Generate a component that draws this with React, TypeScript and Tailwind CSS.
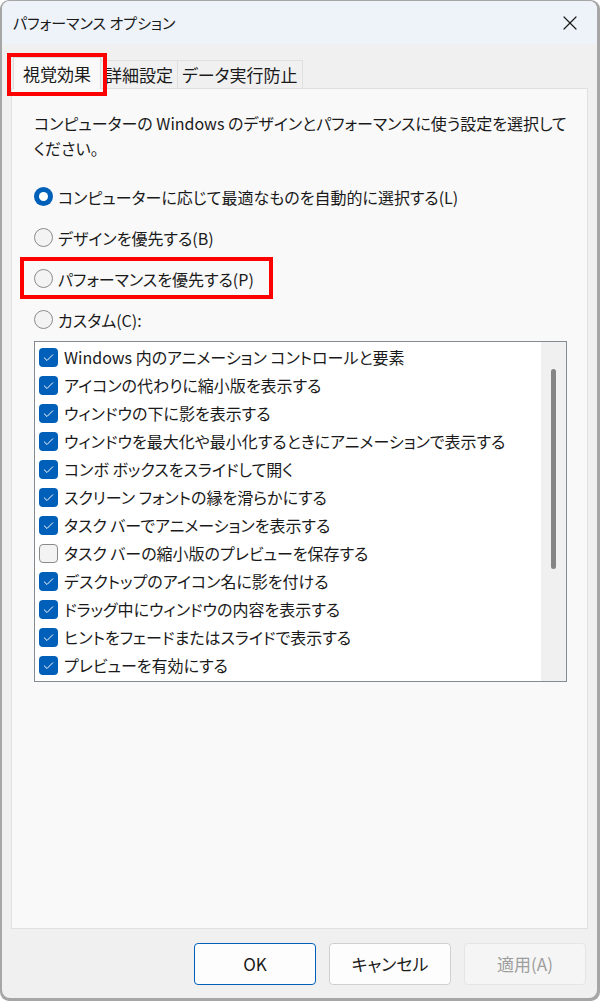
import { X } from 'lucide-react';

const items: { label: string; checked: boolean }[] = [
  { label: 'Windows 内のアニメーション コントロールと要素', checked: true },
  { label: 'アイコンの代わりに縮小版を表示する', checked: true },
  { label: 'ウィンドウの下に影を表示する', checked: true },
  { label: 'ウィンドウを最大化や最小化するときにアニメーションで表示する', checked: true },
  { label: 'コンボ ボックスをスライドして開く', checked: true },
  { label: 'スクリーン フォントの縁を滑らかにする', checked: true },
  { label: 'タスク バーでアニメーションを表示する', checked: true },
  { label: 'タスク バーの縮小版のプレビューを保存する', checked: false },
  { label: 'デスクトップのアイコン名に影を付ける', checked: true },
  { label: 'ドラッグ中にウィンドウの内容を表示する', checked: true },
  { label: 'ヒントをフェードまたはスライドで表示する', checked: true },
  { label: 'プレビューを有効にする', checked: true },
];

function Radio({ checked, label, highlight }: { checked?: boolean; label: string; highlight?: boolean }) {
  return (
    <div className="relative flex items-center h-[41px]">
      {highlight && (
        <div className="absolute left-[-14px] top-[-1px] w-[253px] h-[42px] border-[4px] border-[#ff0000]"></div>
      )}
      {checked ? (
        <span className="w-[19px] h-[19px] rounded-full bg-[#005fb8] flex items-center justify-center shrink-0">
          <span className="w-[9px] h-[9px] rounded-full bg-white"></span>
        </span>
      ) : (
        <span className="w-[19px] h-[19px] rounded-full border border-[#8a8a8a] bg-[#f3f3f3] shrink-0"></span>
      )}
      <span className="ml-[5px]">{label}</span>
    </div>
  );
}

function Checkbox({ checked }: { checked: boolean }) {
  return checked ? (
    <span className="w-[19px] h-[19px] rounded-[4px] bg-[#005fb8] flex items-center justify-center shrink-0">
      <svg width="11" height="9" viewBox="0 0 11 9" fill="none">
        <path d="M1 4.6 L4 7.5 L10 1.5" stroke="white" strokeWidth="1" />
      </svg>
    </span>
  ) : (
    <span className="w-[19px] h-[19px] rounded-[4px] border border-[#8a8a8a] bg-[#f3f3f3] shrink-0"></span>
  );
}

export default function App() {
  return (
    <div
      className="w-[600px] h-[1001px] bg-white text-[#1a1a1a] text-[16px] [font-feature-settings:'palt'] overflow-hidden"
      style={{ fontFamily: '"Noto Sans CJK JP", "Noto Sans", sans-serif' }}
    >
      <div className="h-full rounded-[9px] bg-[#a6a6a6] pl-[2px] pr-[3px] pb-[3px] pt-[1px]">
        <div className="h-full rounded-[8px] bg-[#f0f0f0] flex flex-col overflow-hidden">
          {/* Title bar */}
          <header className="h-[43px] bg-[#eef3f9] flex items-center justify-between pl-[11px] pr-[15px] shrink-0">
            <span className="text-[15px] leading-none">パフォーマンス オプション</span>
            <X className="w-[24px] h-[24px] text-[#1a1a1a]" strokeWidth={1.2} />
          </header>

          {/* Tabs */}
          <div className="flex items-end pl-[11px] pt-[13px] text-[17px]">
            <div className="relative h-[32px] px-[9px] bg-[#f9f9f9] border border-b-0 border-[#dcdcdc] flex items-center z-10 -mb-px">
              <div className="absolute left-[-7px] top-[-5px] right-[-7px] bottom-[-7px] border-[4px] border-[#ff0000]"></div>
              視覚効果
            </div>
            <div className="h-[28px] px-[4px] bg-[#f0f0f0] border border-[#e0e0e0] border-l-0 border-b-0 flex items-center">詳細設定</div>
            <div className="h-[28px] px-[4px] bg-[#f0f0f0] border border-[#e0e0e0] border-l-0 border-b-0 flex items-center">データ実行防止</div>
          </div>

          {/* Panel */}
          <div className="mx-[9px] h-[841px] bg-[#f9f9f9] border border-[#e0e0e0] pl-[22px] pt-[22px]">
            <p className="leading-[25px]">
              コンピューターの Windows のデザインとパフォーマンスに使う設定を選択して
              <br />
              ください。
            </p>
            <div className="mt-[15px] flex flex-col">
              <Radio checked label="コンピューターに応じて最適なものを自動的に選択する(L)" />
              <Radio label="デザインを優先する(B)" />
              <Radio highlight label="パフォーマンスを優先する(P)" />
              <Radio label="カスタム(C):" />
            </div>
            <div className="mt-[1px] w-[533px] h-[341px] border border-[#868a91] bg-white flex">
              <div className="flex-1 pl-[4px] pt-[1px]">
                {items.map((it) => (
                  <div key={it.label} className="h-[28px] flex items-center gap-[6px]">
                    <Checkbox checked={it.checked} />
                    <span>{it.label}</span>
                  </div>
                ))}
              </div>
              <div className="w-[25px] bg-[#f0f0f0] pt-[27px] flex justify-center">
                <div className="w-[5px] h-[200px] rounded-full bg-[#858585]"></div>
              </div>
            </div>
          </div>

          {/* Buttons */}
          <div className="flex justify-end gap-[13px] pr-[11px] pt-[14px] text-[17px]">
            <button className="w-[122px] h-[42px] rounded-[4px] bg-[#fdfdfd] border border-[#005fb8]">OK</button>
            <button className="w-[122px] h-[42px] rounded-[4px] bg-[#fdfdfd] border border-[#d0d0d0]">キャンセル</button>
            <button className="w-[122px] h-[42px] rounded-[4px] bg-[#f5f5f5] border border-[#e5e5e5] text-[#9d9d9d]">適用(A)</button>
          </div>
        </div>
      </div>
    </div>
  );
}
